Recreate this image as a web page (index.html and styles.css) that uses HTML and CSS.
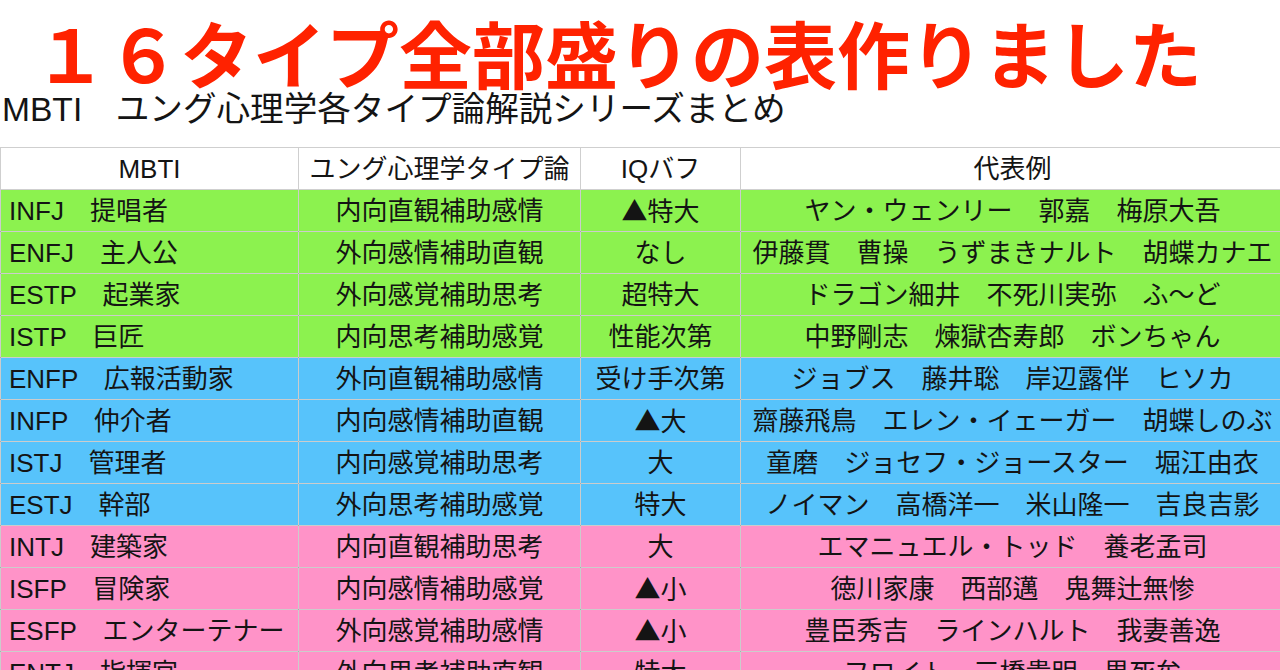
FILE: index.html
```html
<!DOCTYPE html>
<html lang="ja">
<head>
<meta charset="utf-8">
<title>16タイプ全部盛りの表</title>
<link rel="stylesheet" href="styles.css">
</head>
<body>
<h1 class="title">１６タイプ全部盛りの表作りました</h1>
<p class="subtitle">MBTI　ユング心理学各タイプ論解説シリーズまとめ</p>
<table class="mbti">
  <colgroup>
    <col class="c1"><col class="c2"><col class="c3"><col class="c4">
  </colgroup>
  <thead>
    <tr><th>MBTI</th><th>ユング心理学タイプ論</th><th>IQバフ</th><th>代表例</th></tr>
  </thead>
  <tbody>
    <tr class="green"><td class="name">INFJ　提唱者</td><td>内向直観補助感情</td><td><span class="tri">▲</span>特大</td><td>ヤン・ウェンリー　郭嘉　梅原大吾</td></tr>
    <tr class="green"><td class="name">ENFJ　主人公</td><td>外向感情補助直観</td><td>なし</td><td>伊藤貫　曹操　うずまきナルト　胡蝶カナエ</td></tr>
    <tr class="green"><td class="name">ESTP　起業家</td><td>外向感覚補助思考</td><td>超特大</td><td>ドラゴン細井　不死川実弥　ふ〜ど</td></tr>
    <tr class="green"><td class="name">ISTP　巨匠</td><td>内向思考補助感覚</td><td>性能次第</td><td>中野剛志　煉獄杏寿郎　ボンちゃん</td></tr>
    <tr class="blue"><td class="name">ENFP　広報活動家</td><td>外向直観補助感情</td><td>受け手次第</td><td>ジョブス　藤井聡　岸辺露伴　ヒソカ</td></tr>
    <tr class="blue"><td class="name">INFP　仲介者</td><td>内向感情補助直観</td><td><span class="tri">▲</span>大</td><td>齋藤飛鳥　エレン・イェーガー　胡蝶しのぶ</td></tr>
    <tr class="blue"><td class="name">ISTJ　管理者</td><td>内向感覚補助思考</td><td>大</td><td>童磨　ジョセフ・ジョースター　堀江由衣</td></tr>
    <tr class="blue"><td class="name">ESTJ　幹部</td><td>外向思考補助感覚</td><td>特大</td><td>ノイマン　高橋洋一　米山隆一　吉良吉影</td></tr>
    <tr class="pink"><td class="name">INTJ　建築家</td><td>内向直観補助思考</td><td>大</td><td>エマニュエル・トッド　養老孟司</td></tr>
    <tr class="pink"><td class="name">ISFP　冒険家</td><td>内向感情補助感覚</td><td><span class="tri">▲</span>小</td><td>徳川家康　西部邁　鬼舞辻無惨</td></tr>
    <tr class="pink"><td class="name">ESFP　エンターテナー</td><td>外向感覚補助感情</td><td><span class="tri">▲</span>小</td><td>豊臣秀吉　ラインハルト　我妻善逸</td></tr>
    <tr class="pink"><td class="name">ENTJ　指揮官</td><td>外向思考補助直観</td><td>特大</td><td>フロイト　三橋貴明　黒死牟</td></tr>
  </tbody>
</table>
</body>
</html>
```
FILE: styles.css
```css
html, body {
  margin: 0;
  padding: 0;
  background: #ffffff;
  overflow: hidden;
}
body {
  font-family: "Liberation Sans", "Noto Sans CJK JP", sans-serif;
  color: #141414;
  width: 1280px;
}
.title {
  margin: 10px 0 0 0;
  padding-left: 34px;
  font-family: "Noto Sans CJK JP", sans-serif;
  font-weight: 700;
  font-size: 73px;
  line-height: 83px;
  color: #ff2200;
  white-space: nowrap;
}
.subtitle {
  margin: 0;
  padding-left: 2px;
  font-size: 33.6px;
  line-height: 34px;
  font-weight: 400;
  white-space: nowrap;
}
.mbti {
  margin-top: 20px;
  border-collapse: collapse;
  table-layout: fixed;
  width: 1284px;
  font-size: 26px;
}
.c1 { width: 298px; }
.c2 { width: 282px; }
.c3 { width: 160px; }
.c4 { width: 544px; }
.mbti th, .mbti td {
  height: 41px;
  padding: 0;
  text-align: center;
  vertical-align: middle;
  white-space: nowrap;
  overflow: hidden;
  line-height: 30px;
  font-weight: 400;
}
.mbti th {
  background: #ffffff;
  border: 1px solid #cfcfcf;
}
.mbti td {
  border: 1px solid rgba(110, 110, 110, 0.35);
}
.mbti td.name {
  text-align: left;
  padding-left: 8px;
}
.tri {
  font-family: "Noto Sans CJK JP", sans-serif;
}
.green td { background: #8cf24f; }
.blue td { background: #57c3fb; }
.pink td { background: #ff93c8; }
```
